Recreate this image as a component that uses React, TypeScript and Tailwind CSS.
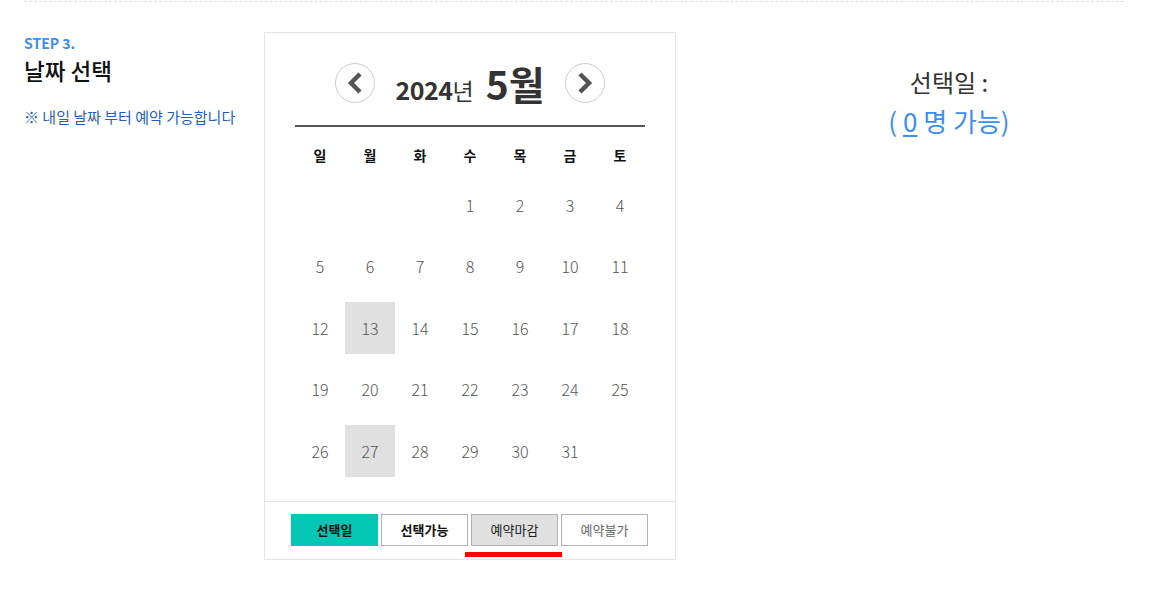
import React from 'react';

const days = ['일', '월', '화', '수', '목', '금', '토'];

// May 2024 starts on Wednesday
const cells: (number | null)[] = [
  null, null, null, 1, 2, 3, 4,
  5, 6, 7, 8, 9, 10, 11,
  12, 13, 14, 15, 16, 17, 18,
  19, 20, 21, 22, 23, 24, 25,
  26, 27, 28, 29, 30, 31, null,
];

const closed = [13, 27];

const Chevron: React.FC<{ dir: 'left' | 'right' }> = ({ dir }) => (
  <button className="w-[40px] h-[40px] rounded-full border border-[#cccccc] bg-white flex items-center justify-center">
    <svg width="20" height="24" viewBox="0 0 20 24" fill="none">
      {dir === 'left' ? (
        <path d="M15 3 L6 12 L15 21" stroke="#555" strokeWidth="4.5" strokeLinecap="butt" strokeLinejoin="miter" />
      ) : (
        <path d="M5 3 L14 12 L5 21" stroke="#555" strokeWidth="4.5" strokeLinecap="butt" strokeLinejoin="miter" />
      )}
    </svg>
  </button>
);

const App: React.FC = () => {
  return (
    <div className="w-[1162px] h-[595px] bg-white font-['Noto_Sans_CJK_KR','Noto_Sans',sans-serif] text-[#333]">
      <div className="ml-[24px] mr-[38px] border-t border-dashed border-[#dcdcdc] mt-[1px]" />
      <div className="flex pl-[24px] pt-[30px]">
        {/* Left - step title */}
        <div className="w-[240px]">
          <div className="text-[14px] font-bold text-[#3a8ff0] leading-[20px] mt-[1px]">STEP 3.</div>
          <h2 className="text-[22.5px] font-medium text-[#111] leading-[30px] mt-[2px]">날짜 선택</h2>
          <p className="text-[15px] text-[#1f5fbf] leading-[20px] mt-[22px]">※ 내일 날짜 부터 예약 가능합니다</p>
        </div>

        {/* Calendar */}
        <div className="w-[412px] h-[528px] border border-[#e4e4e4] flex flex-col">
          <div className="flex-1 px-[30px]">
            <div className="flex items-center justify-center gap-[20px] pt-[30px]">
              <Chevron dir="left" />
              <div className="flex items-baseline text-[#333] font-bold h-[40px] leading-[40px]">
                <span className="text-[25px] tracking-[-0.5px]">2024</span>
                <span className="text-[23px] font-normal">년</span>
                <span className="text-[39px] ml-[12px]">5월</span>
              </div>
              <Chevron dir="right" />
            </div>
            <div className="h-[2px] bg-[#555] mt-[22px]" />
            <div className="grid grid-cols-7 mt-[15px]">
              {days.map((d) => (
                <div key={d} className="h-[26px] flex items-center justify-center text-[14px] font-bold text-[#111]">
                  {d}
                </div>
              ))}
            </div>
            <div className="grid grid-cols-7 mt-[6px]">
              {cells.map((c, i) => (
                <div key={i} className="h-[61.5px] flex items-center justify-center">
                  {c !== null && (
                    <div
                      className={`w-[50px] h-[52px] flex items-center justify-center text-[16px] font-light text-[#555] ${
                        closed.includes(c) ? 'bg-[#e0e0e0]' : ''
                      }`}
                    >
                      {c}
                    </div>
                  )}
                </div>
              ))}
            </div>
          </div>
          <div className="border-t border-[#e4e4e4] h-[58px] pt-[12px] pl-[26px] flex gap-[3px]">
            <div className="w-[87px] h-[32px] bg-[#03c6b4] flex items-center justify-center text-[13px] font-bold text-[#111]">
              선택일
            </div>
            <div className="w-[87px] h-[32px] border border-[#b3b3b3] bg-white flex items-center justify-center text-[13px] font-bold text-[#111]">
              선택가능
            </div>
            <div className="relative">
              <div className="w-[87px] h-[32px] border border-[#b3b3b3] bg-[#e0e0e0] flex items-center justify-center text-[13px] text-[#222]">
                예약마감
              </div>
              <div className="absolute left-[-6px] top-[38px] w-[97px] h-[5px] bg-[#ff0000]" />
            </div>
            <div className="w-[87px] h-[32px] border border-[#b3b3b3] bg-white flex items-center justify-center text-[13px] text-[#666]">
              예약불가
            </div>
          </div>
        </div>

        {/* Right - selected day */}
        <div className="flex-1 flex flex-col items-center pt-[32px] pl-[60px]">
          <div className="text-[24px] text-[#333] leading-[36px]">선택일 :</div>
          <div className="text-[26px] text-[#3a8ff0] leading-[36px] mt-[3px]">
            ( <span className="underline underline-offset-[3px]">0</span> 명 가능)
          </div>
        </div>
      </div>
    </div>
  );
};

export default App;
